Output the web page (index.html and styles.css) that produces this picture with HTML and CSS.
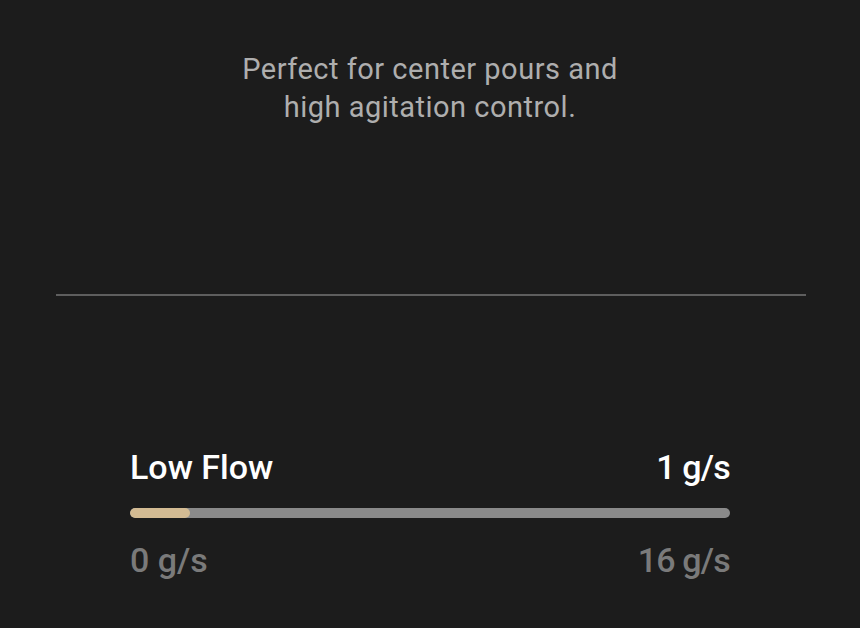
FILE: index.html
```html
<!DOCTYPE html>
<html lang="en">
<head>
  <meta charset="UTF-8">
  <title>Flow</title>
  <link rel="stylesheet" href="styles.css">
</head>
<body>
  <div class="page">
    <p class="desc">Perfect for center pours and<br>high agitation control.</p>

    <hr class="divider">

    <div class="flow">
      <div class="flow-head">
        <span class="flow-name">Low Flow</span>
        <span class="flow-value">1 g/s</span>
      </div>
      <div class="track">
        <div class="fill" style="width: 10%"></div>
      </div>
      <div class="flow-range">
        <span>0 g/s</span>
        <span class="num">16 g/s</span>
      </div>
    </div>
  </div>
</body>
</html>
```

FILE: styles.css
```css
body {
  margin: 0;
  background: #1c1c1c;
  font-family: Roboto, "Liberation Sans", sans-serif;
  height: 628px;
  overflow: hidden;
}

.page {
  display: flex;
  flex-direction: column;
  align-items: center;
  padding-top: 50px;
}

.desc {
  margin: 0;
  text-align: center;
  color: #aeaeae;
  font-size: 29px;
  line-height: 38px;
  letter-spacing: 0.5px;
}

.divider {
  width: 750px;
  margin: 168px 0 0 1px;
  border: 0;
  height: 2px;
  background: #5e5e5e;
}

.flow {
  width: 600px;
  margin-top: 152px;
}

.flow-head {
  display: flex;
  justify-content: space-between;
  color: #fff;
  font-size: 34px;
  font-weight: 500;
  line-height: 38px;
}

.flow-value,
.num {
  letter-spacing: -0.8px;
}

.track {
  margin-top: 22px;
  height: 10px;
  border-radius: 5px;
  background: #8a8a8a;
  overflow: hidden;
}

.fill {
  height: 100%;
  background: #d3bb93;
  border-radius: 5px;
}

.flow-range {
  display: flex;
  justify-content: space-between;
  margin-top: 23px;
  color: #7a7a7a;
  font-size: 34px;
  font-weight: 500;
  line-height: 38px;
}
```
